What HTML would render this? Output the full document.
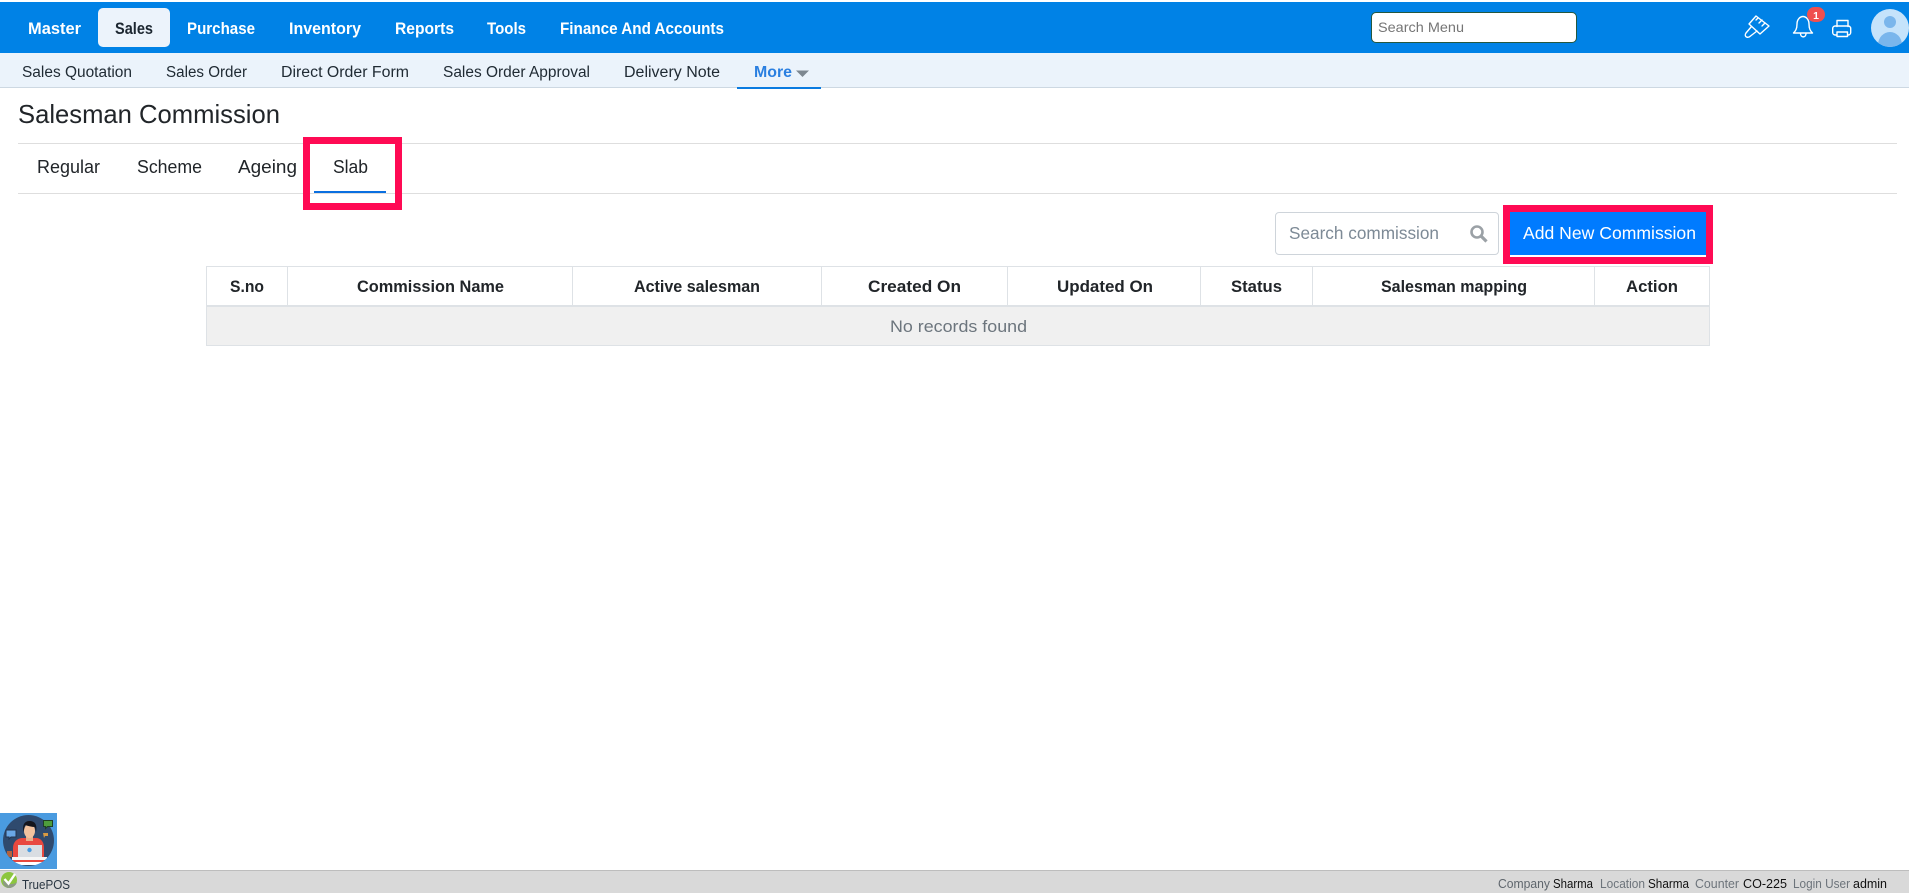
<!DOCTYPE html>
<html lang="en"><head><meta charset="utf-8"><title>Salesman Commission</title>
<style>
html,body{margin:0;padding:0;background:#fff;width:1909px;height:893px;overflow:hidden}
.b{position:absolute;box-sizing:border-box}
svg{position:absolute;left:0;top:0}
text{font-family:"Liberation Sans",sans-serif}
</style></head><body>
<div class="b" style="left:0;top:2px;width:1909px;height:51px;background:#0082e6"></div>
<div class="b" style="left:98px;top:8px;width:72px;height:39px;background:#ecf3fb;border-radius:5px"></div>
<div class="b" style="left:0;top:53px;width:1909px;height:35px;background:#ebf3fb;border-bottom:1px solid #cdd8e2"></div>
<div class="b" style="left:737px;top:87px;width:84px;height:2px;background:#0a7be0"></div>
<div class="b" style="left:1371px;top:12px;width:206px;height:31px;background:#fff;border:1px solid #24583f;border-radius:5px"></div>
<div class="b" style="left:18px;top:143px;width:1879px;height:1px;background:#dedede"></div>
<div class="b" style="left:18px;top:193px;width:1879px;height:1px;background:#dedede"></div>
<div class="b" style="left:303px;top:137px;width:99px;height:73px;border:7px solid #ff0a54"></div>
<div class="b" style="left:314px;top:191px;width:72px;height:2px;background:#0a6fe0"></div>
<div class="b" style="left:1275px;top:212px;width:224px;height:43px;border:1px solid #ced4da;border-radius:4px;background:#fff"></div>
<div class="b" style="left:1503px;top:205px;width:210px;height:59px;background:#ff0a54"></div>
<div class="b" style="left:1510px;top:212px;width:196px;height:43px;background:#007bff"></div>
<div class="b" style="left:1510px;top:255px;width:196px;height:2px;background:#fff"></div>
<div class="b" style="left:206px;top:266px;width:1504px;height:80px;border:1px solid #dee2e6;background:#fff"></div>
<div class="b" style="left:207px;top:305px;width:1502px;height:2px;background:#dee2e6"></div>
<div class="b" style="left:207px;top:307px;width:1502px;height:38px;background:#f0f0f0"></div>
<div class="b" style="left:287px;top:267px;width:1px;height:38px;background:#dee2e6"></div>
<div class="b" style="left:572px;top:267px;width:1px;height:38px;background:#dee2e6"></div>
<div class="b" style="left:821px;top:267px;width:1px;height:38px;background:#dee2e6"></div>
<div class="b" style="left:1007px;top:267px;width:1px;height:38px;background:#dee2e6"></div>
<div class="b" style="left:1200px;top:267px;width:1px;height:38px;background:#dee2e6"></div>
<div class="b" style="left:1312px;top:267px;width:1px;height:38px;background:#dee2e6"></div>
<div class="b" style="left:1594px;top:267px;width:1px;height:38px;background:#dee2e6"></div>
<div class="b" style="left:0;top:870px;width:1909px;height:23px;background:#d9d9d9;border-top:1px solid #bdbdbd"></div>
<div class="b" style="left:0;top:813px;width:57px;height:56px;background:#4a9be0"></div>

<svg width="1909" height="893" viewBox="0 0 1909 893">
<g font-size="17" font-weight="700" fill="#fff">
<text x="28" y="34" textLength="53" lengthAdjust="spacingAndGlyphs">Master</text>
<text x="115" y="34" textLength="38" lengthAdjust="spacingAndGlyphs" fill="#1c2630">Sales</text>
<text x="187" y="34" textLength="68" lengthAdjust="spacingAndGlyphs">Purchase</text>
<text x="289" y="34" textLength="72" lengthAdjust="spacingAndGlyphs">Inventory</text>
<text x="395" y="34" textLength="59" lengthAdjust="spacingAndGlyphs">Reports</text>
<text x="487" y="34" textLength="39" lengthAdjust="spacingAndGlyphs">Tools</text>
<text x="560" y="34" textLength="164" lengthAdjust="spacingAndGlyphs">Finance And Accounts</text>
</g>
<g font-size="15.5" fill="#1f2a33">
<text x="22" y="77" textLength="110" lengthAdjust="spacingAndGlyphs">Sales Quotation</text>
<text x="166" y="77" textLength="81" lengthAdjust="spacingAndGlyphs">Sales Order</text>
<text x="281" y="77" textLength="128" lengthAdjust="spacingAndGlyphs">Direct Order Form</text>
<text x="443" y="77" textLength="147" lengthAdjust="spacingAndGlyphs">Sales Order Approval</text>
<text x="624" y="77" textLength="96" lengthAdjust="spacingAndGlyphs">Delivery Note</text>
</g>
<text x="754" y="77" textLength="38" lengthAdjust="spacingAndGlyphs" font-size="15.5" font-weight="700" fill="#2a7fe0">More</text>
<path d="M796 70.500h13l-6.500 6.500z" fill="#7d8790"/>
<text x="1378" y="32" font-size="14" fill="#757575" textLength="86" lengthAdjust="spacingAndGlyphs">Search Menu</text>

<!-- brush -->
<g fill="none" stroke="#fff" stroke-width="1.400" stroke-linejoin="round" stroke-linecap="round">
<path d="M1756 16L1769 26L1760 34L1749 24Z"/>
<path d="M1756 20l2-2M1759 23l3-3M1762 26l3-3"/>
<path d="M1751.500 26.500L1746 33c-1.500 2-.5 3.500.5 4 1 .5 2.500.5 4-1L1757 31"/>
<!-- bell -->
<path d="M1793.500 33c2-2 3.500-4 3.500-9 0-4.500 3-7.500 6-7.500s6 3 6 7.500c0 5 1.500 7 3.500 9z"/>
<path d="M1800.500 33.500c0 4.500 5.500 4.500 5.500 0"/>
<!-- printer -->
<path d="M1837 26.500V20.500h11V26.500"/>
<rect x="1832.700" y="26" width="18" height="9" rx="2.500"/>
<rect x="1837" y="32" width="10.500" height="4.500" fill="#0082e6"/>
</g>
<rect x="1807" y="7" width="18" height="15" rx="7.500" fill="#ef4f4f"/>
<text x="1816" y="19" font-size="10.500" font-weight="700" fill="#fff" text-anchor="middle">1</text>
<!-- avatar -->
<defs><clipPath id="a"><circle cx="1890" cy="28" r="19"/></clipPath></defs>
<circle cx="1890" cy="28" r="19" fill="#c5e3fb"/>
<g clip-path="url(#a)" fill="#7ab6ec"><circle cx="1890" cy="22" r="6"/><ellipse cx="1890" cy="45" rx="12" ry="13"/></g>

<text x="18" y="123" font-size="26" fill="#212529" textLength="262" lengthAdjust="spacingAndGlyphs">Salesman Commission</text>
<g font-size="18" fill="#212529">
<text x="37" y="173" textLength="63" lengthAdjust="spacingAndGlyphs">Regular</text>
<text x="137" y="173" textLength="65" lengthAdjust="spacingAndGlyphs">Scheme</text>
<text x="238" y="173" textLength="59" lengthAdjust="spacingAndGlyphs">Ageing</text>
<text x="333" y="173" textLength="35" lengthAdjust="spacingAndGlyphs">Slab</text>
</g>
<text x="1289" y="239" font-size="17.500" fill="#7d8a96" textLength="150" lengthAdjust="spacingAndGlyphs">Search commission</text>
<g fill="none" stroke="#9ba1a6" stroke-width="2.600"><circle cx="1477" cy="232" r="5.500"/><path d="M1481 236l5.500 5.500" stroke-width="3.200"/></g>
<text x="1523" y="239" font-size="17.500" fill="#fff" textLength="173" lengthAdjust="spacingAndGlyphs">Add New Commission</text>

<g font-size="17" font-weight="700" fill="#212529">
<text x="230" y="292" textLength="34" lengthAdjust="spacingAndGlyphs">S.no</text>
<text x="357" y="292" textLength="147" lengthAdjust="spacingAndGlyphs">Commission Name</text>
<text x="634" y="292" textLength="126" lengthAdjust="spacingAndGlyphs">Active salesman</text>
<text x="868" y="292" textLength="93" lengthAdjust="spacingAndGlyphs">Created On</text>
<text x="1057" y="292" textLength="96" lengthAdjust="spacingAndGlyphs">Updated On</text>
<text x="1231" y="292" textLength="51" lengthAdjust="spacingAndGlyphs">Status</text>
<text x="1381" y="292" textLength="146" lengthAdjust="spacingAndGlyphs">Salesman mapping</text>
<text x="1626" y="292" textLength="52" lengthAdjust="spacingAndGlyphs">Action</text>
</g>
<text x="890" y="332" font-size="17" fill="#6c757d" textLength="137" lengthAdjust="spacingAndGlyphs">No records found</text>

<!-- bot avatar -->
<defs><clipPath id="c"><circle cx="28.500" cy="840.500" r="25.500"/></clipPath></defs>
<circle cx="28.500" cy="840.500" r="25.500" fill="#2f4a6e"/>
<g clip-path="url(#c)">
<path d="M13 862v-14c0-6 4-10 10-10h13c5 0 8 4 8 10v14z" fill="#e8483f"/>
<rect x="26" y="835" width="7" height="6" fill="#e9b08c"/>
<ellipse cx="29.500" cy="831" rx="5.500" ry="7" fill="#f2c29e"/>
<path d="M23.500 832c-1.500-7 1-11 6-11s8 3 6.500 11l-1-5c-3 0-7-1-10-2z" fill="#14151c"/>
<rect x="12" y="857" width="35" height="3" fill="#f6f6f6"/><rect x="15" y="862" width="29" height="3" fill="#fff"/>
<rect x="7" y="851" width="5" height="6" fill="#b5623c"/>
</g>
<path d="M18 845h24v12H18z" fill="#d9dde2"/><circle cx="29.500" cy="850" r="2.200" fill="#4a9be0"/>
<path d="M6 830h10v7h-5l-2 2v-2H6z" fill="#6aa7e6" stroke="#24344f" stroke-width="1"/>
<path d="M43.500 820.500h9v6h-5l-2 2v-2h-2z" fill="#4e9d3c" stroke="#1f3f25" stroke-width="1"/>
<path d="M43 833h5v3h-3l-1 2z" fill="#d99a42"/>

<!-- check -->
<circle cx="9" cy="880" r="8" fill="#8cc63f"/>
<path d="M3 880c-1 5 3 8 6 8s7-2 8-6c-3 3-10 3-14-2z" fill="#8d9a86"/>
<path d="M4.500 879l4 4.500L15 874" fill="none" stroke="#fff" stroke-width="2.400"/>
<text x="22" y="889" font-size="12.500" fill="#2a3642" textLength="48" lengthAdjust="spacingAndGlyphs">TruePOS</text>

<g font-size="13">
<text x="1498" y="888" fill="#5f666d" textLength="52" lengthAdjust="spacingAndGlyphs">Company</text>
<text x="1553" y="888" fill="#111" textLength="40" lengthAdjust="spacingAndGlyphs">Sharma</text>
<text x="1600" y="888" fill="#6d747b" textLength="45" lengthAdjust="spacingAndGlyphs">Location</text>
<text x="1648" y="888" fill="#111" textLength="41" lengthAdjust="spacingAndGlyphs">Sharma</text>
<text x="1695" y="888" fill="#6d747b" textLength="44" lengthAdjust="spacingAndGlyphs">Counter</text>
<text x="1743" y="888" fill="#111" textLength="44" lengthAdjust="spacingAndGlyphs">CO-225</text>
<text x="1793" y="888" fill="#6d747b" textLength="57" lengthAdjust="spacingAndGlyphs">Login User</text>
<text x="1853" y="888" fill="#111" textLength="34" lengthAdjust="spacingAndGlyphs">admin</text>
</g>
</svg>
</body></html>
